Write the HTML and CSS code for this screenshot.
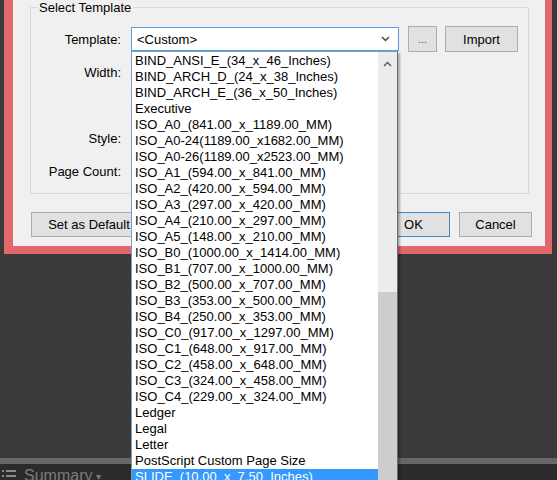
FILE: index.html
```html
<!DOCTYPE html>
<html lang="en">
<head>
<meta charset="UTF-8" />
<title>Select Template</title>
<link rel="stylesheet" href="styles.css">
</head>
<body>

<div class="dialog">
  <fieldset class="group">
    <legend>Select Template</legend>
    <div class="row">
      <label class="field-label">Template:</label>
      <div class="combo">
        <span>&lt;Custom&gt;</span>
        <svg class="combo-arrow" width="9" height="6" viewBox="0 0 9 6"><path d="M1 1 L4.5 4.5 L8 1" fill="none" stroke="#444" stroke-width="1.4"/></svg>
      </div>
      <button class="btn btn-dots">...</button>
      <button class="btn btn-import">Import</button>
    </div>
    <div class="row">
      <label class="field-label">Width:</label>
    </div>
    <div class="row"></div>
    <div class="row">
      <label class="field-label">Style:</label>
    </div>
    <div class="row">
      <label class="field-label">Page Count:</label>
    </div>
  </fieldset>

  <div class="dialog-buttons">
    <button class="btn btn-default">Set as Default</button>
    <div class="btn-pair">
      <button class="btn btn-ok">OK</button>
      <button class="btn btn-cancel">Cancel</button>
    </div>
  </div>
</div>

<div class="workspace"></div>
<div class="splitter"></div>
<div class="statusbar">
  <svg width="14" height="12" viewBox="0 0 14 12"><g fill="#8a8a8a"><rect x="0" y="1" width="2" height="2"/><rect x="4" y="1" width="10" height="2"/><rect x="0" y="6" width="2" height="2"/><rect x="4" y="6" width="10" height="2"/><rect x="0" y="11" width="2" height="2"/><rect x="4" y="11" width="10" height="2"/></g></svg>
  <span class="status-title">Summary</span>
  <span class="status-caret">&#9662;</span>
</div>

<!-- open combo list -->
<div class="droplist">
  <ul class="items">
    <li>BIND_ANSI_E_(34_x_46_Inches)</li>
    <li>BIND_ARCH_D_(24_x_38_Inches)</li>
    <li>BIND_ARCH_E_(36_x_50_Inches)</li>
    <li>Executive</li>
    <li>ISO_A0_(841.00_x_1189.00_MM)</li>
    <li>ISO_A0-24(1189.00_x1682.00_MM)</li>
    <li>ISO_A0-26(1189.00_x2523.00_MM)</li>
    <li>ISO_A1_(594.00_x_841.00_MM)</li>
    <li>ISO_A2_(420.00_x_594.00_MM)</li>
    <li>ISO_A3_(297.00_x_420.00_MM)</li>
    <li>ISO_A4_(210.00_x_297.00_MM)</li>
    <li>ISO_A5_(148.00_x_210.00_MM)</li>
    <li>ISO_B0_(1000.00_x_1414.00_MM)</li>
    <li>ISO_B1_(707.00_x_1000.00_MM)</li>
    <li>ISO_B2_(500.00_x_707.00_MM)</li>
    <li>ISO_B3_(353.00_x_500.00_MM)</li>
    <li>ISO_B4_(250.00_x_353.00_MM)</li>
    <li>ISO_C0_(917.00_x_1297.00_MM)</li>
    <li>ISO_C1_(648.00_x_917.00_MM)</li>
    <li>ISO_C2_(458.00_x_648.00_MM)</li>
    <li>ISO_C3_(324.00_x_458.00_MM)</li>
    <li>ISO_C4_(229.00_x_324.00_MM)</li>
    <li>Ledger</li>
    <li>Legal</li>
    <li>Letter</li>
    <li>PostScript Custom Page Size</li>
    <li class="selected">SLIDE_(10.00_x_7.50_Inches)</li>
    <li>Tabloid</li>
  </ul>
  <div class="scrollbar">
    <svg class="scroll-up" width="9" height="6" viewBox="0 0 9 6"><path d="M1 5 L4.5 1.5 L8 5" fill="none" stroke="#555" stroke-width="1.4"/></svg>
    <div class="scroll-thumb"></div>
  </div>
</div>

</body>
</html>
```

FILE: styles.css
```css
body {
  margin: 0;
  width: 557px;
  height: 480px;
  overflow: hidden;
  position: relative;
  background: #3a3a3a;
  font-family: "Liberation Sans", Arial, sans-serif;
  font-size: 13px;
  color: #000;
  display: flex;
  flex-direction: column;
}

.dialog {
  margin: 0 5px 0 4px;
  background: #f0f0f0;
  border: 9px solid #e2686e;
  border-top: none;
  border-right-width: 7px;
  border-bottom-width: 8px;
  padding-bottom: 9px;
}

.group {
  margin: 0 16px 0 17px;
  padding: 11px 0 9px 6px;
  border: 1px solid #dadada;
  display: flex;
  flex-direction: column;
  gap: 7px;
}

.group legend {
  padding: 0 2px;
  line-height: 15px;
}

.row {
  height: 26px;
  display: flex;
  align-items: center;
  margin-left: -6px;
}

.field-label {
  width: 90px;
  text-align: right;
  margin-right: 10px;
}

.combo {
  width: 265px;
  height: 22px;
  border: 1px solid #569de5;
  background: #fff;
  display: flex;
  align-items: center;
  justify-content: space-between;
  padding-left: 5px;
  box-sizing: content-box;
  width: 260px;
  padding-right: 1px;
}

.combo-arrow {
  margin-right: 7px;
}

.btn {
  font-family: inherit;
  font-size: 13px;
  background: #e1e1e1;
  border: 1px solid #adadad;
  color: #000;
  padding: 0;
  height: 26px;
}

.btn-dots {
  width: 29px;
  margin-left: 9px;
  color: #555;
  font-size: 11px;
}

.btn-import {
  width: 73px;
  margin-left: 8px;
}

.dialog-buttons {
  display: flex;
  justify-content: space-between;
  padding: 18px 13px 0 18px;
}

.btn-default {
  width: 116px;
  height: 25px;
}

.btn-pair {
  display: flex;
  gap: 9px;
}

.btn-ok,
.btn-cancel {
  width: 73px;
  height: 25px;
}

.btn-ok {
  border-color: #3c88c8;
}

.workspace {
  flex: 1;
}

.splitter {
  height: 6px;
  background: #676767;
}

.statusbar {
  height: 16px;
  background: #2b2b2b;
  display: flex;
  align-items: center;
  padding-left: 2px;
  gap: 8px;
  color: #7c7c7c;
  font-size: 16px;
}

.statusbar svg {
  margin-top: 6px;
}

.status-title {
  margin-top: 8px;
}

.status-caret {
  font-size: 10px;
  margin-top: 8px;
  margin-left: -4px;
}

/* open combo list */
.droplist {
  position: absolute;
  left: 131px;
  top: 51px;
  width: 265px;
  height: 440px;
  border: 1px solid #7f9db9;
  border-right-color: #6c6c6c;
  background: #fff;
  box-shadow: 2px 2px 2px rgba(0, 0, 0, 0.3);
  display: flex;
  z-index: 10;
}

.items {
  list-style: none;
  margin: 0;
  padding: 1px 0 0;
  flex: 1;
}

.items li {
  height: 16px;
  line-height: 16px;
  padding-left: 3px;
  white-space: nowrap;
  overflow: hidden;
}

.items li.selected {
  background: #3399ff;
  color: #fff;
}

.scrollbar {
  width: 19px;
  background: #ececec;
  position: relative;
  display: flex;
  flex-direction: column;
  align-items: center;
}

.scroll-up {
  margin-top: 9px;
}

.scroll-thumb {
  position: absolute;
  left: 0;
  right: 0;
  top: 240px;
  bottom: 0;
  background: #cdcdcd;
}
```
